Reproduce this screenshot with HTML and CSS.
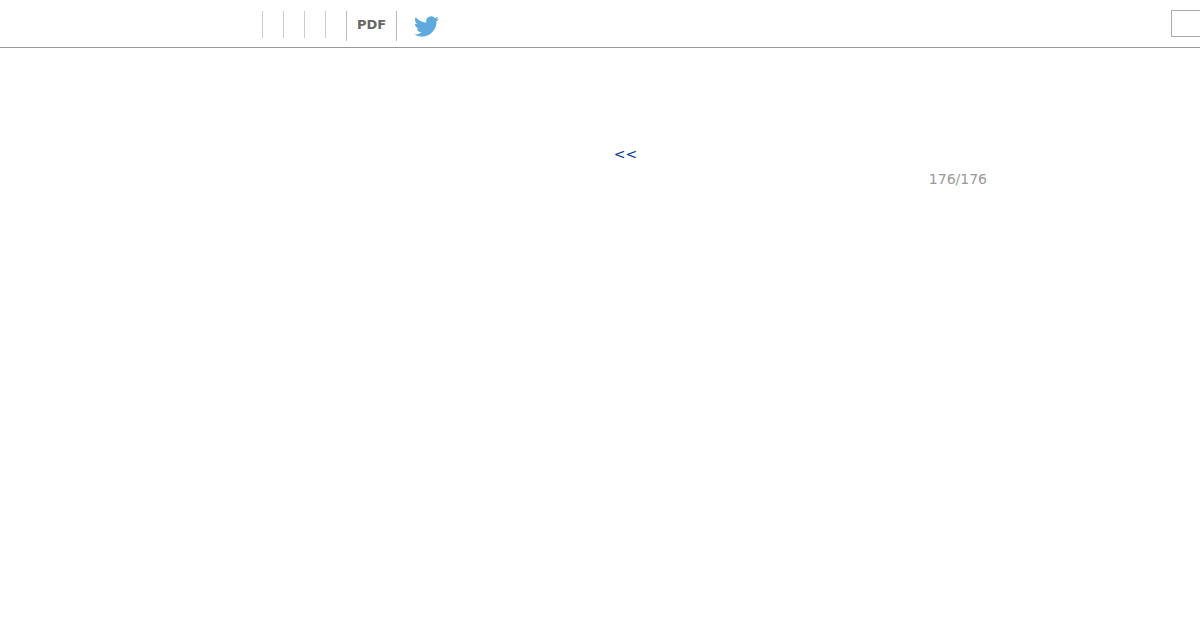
FILE: index.html
```html
<!DOCTYPE html>
<html lang="en">
<head>
    <meta charset="UTF-8">
    <meta name="viewport" content="width=device-width, initial-scale=1.0">
    <title>Document viewer</title>
    <link rel="stylesheet" href="styles.css">
</head>
<body>
    <div class="toolbar">
        <div class="tools">
            <span class="tool"></span>
            <span class="tool"></span>
            <span class="tool"></span>
            <span class="tool"></span>
            <a class="tool pdf" href="#">PDF</a>
            <a class="tool twitter" href="#">
                <svg width="25" height="25" viewBox="0 0 24 24"><path fill="#5ea9dd" d="M23.953 4.57a10 10 0 01-2.825.775 4.958 4.958 0 002.163-2.723c-.951.555-2.005.959-3.127 1.184a4.92 4.92 0 00-8.384 4.482C7.69 8.095 4.067 6.13 1.64 3.162a4.822 4.822 0 00-.666 2.475c0 1.71.87 3.213 2.188 4.096a4.904 4.904 0 01-2.228-.616v.06a4.923 4.923 0 003.946 4.827 4.996 4.996 0 01-2.212.085 4.936 4.936 0 004.604 3.417 9.867 9.867 0 01-6.102 2.105c-.39 0-.779-.023-1.17-.067a13.995 13.995 0 007.557 2.209c9.053 0 13.998-7.496 13.998-13.985 0-.21 0-.42-.015-.63A9.935 9.935 0 0024 4.59z"/></svg>
            </a>
        </div>
        <input class="search" type="text">
    </div>
    <div class="content">
        <div class="pager"><a href="#">&lt;&lt;</a></div>
        <div class="page-count">176/176</div>
    </div>
</body>
</html>
```

FILE: styles.css
```css
body {
    font-family: "DejaVu Sans", sans-serif;
    background-color: #ffffff;
    margin: 0;
}

.toolbar {
    display: flex;
    justify-content: space-between;
    height: 47px;
    border-bottom: 1px solid #999;
    overflow: hidden;
}

.tools {
    display: flex;
    align-items: flex-start;
    padding-left: 262px;
    padding-top: 11px;
}

.tool {
    display: block;
    width: 20px;
    height: 27px;
    border-left: 1px solid #ccc;
}

.pdf {
    width: 50px;
    height: 30px;
    padding-top: 6px;
    box-sizing: border-box;
    border-left-color: #bbb;
    color: #666;
    font-size: 13px;
    font-weight: bold;
    line-height: 15px;
    text-align: center;
    text-decoration: none;
}

.twitter {
    width: auto;
    height: 30px;
    padding-left: 17px;
    border-left-color: #bbb;
}

.twitter svg {
    display: block;
    margin-top: 3px;
}

.search {
    flex: none;
    width: 40px;
    height: 27px;
    margin: 10px -11px 0 0;
    padding: 0;
    box-sizing: border-box;
    border: 1px solid #aaa;
    background-color: #fff;
}

.content {
    width: 723px;
    margin: 98px 0 0 264px;
}

.pager {
    text-align: center;
    font-size: 14px;
    line-height: 17px;
}

.pager a {
    color: #003399;
    text-decoration: none;
}

.page-count {
    margin-top: 8px;
    text-align: right;
    color: #999;
    font-size: 14px;
    line-height: 17px;
}
```
